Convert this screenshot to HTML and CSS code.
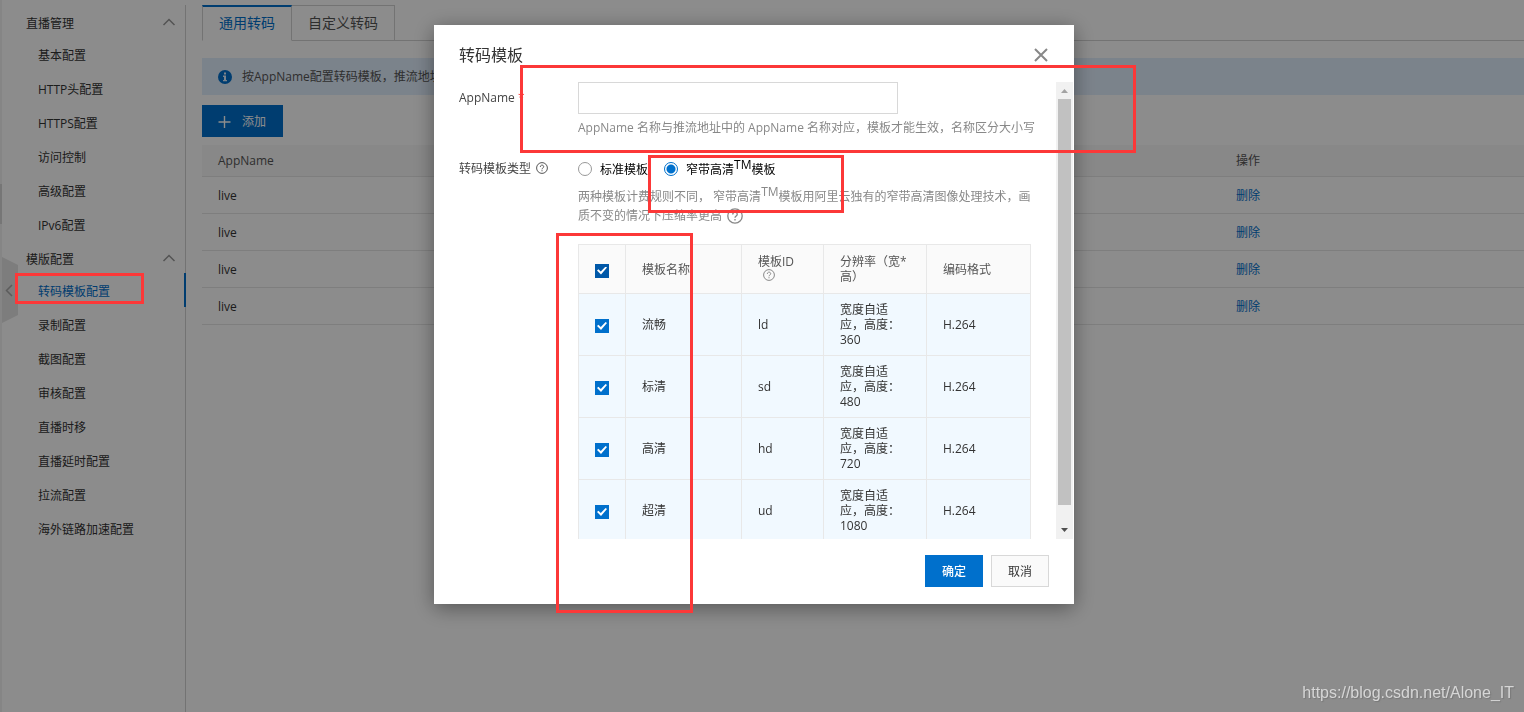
FILE: index.html
```html
<!DOCTYPE html>
<html lang="zh-CN">
<head>
<meta charset="utf-8">
<title>转码模板配置</title>
<link rel="stylesheet" href="styles.css">
</head>
<body>
<div class="page">
  <div class="edge"><span class="edge-mark"></span></div>
  <nav class="sidebar">
    <button class="collapse" type="button" aria-label="收起">
      <svg width="16" height="66" viewBox="0 0 16 66"><path d="M0 0L16 8V58L0 66Z" fill="#e3e3e3"/><path d="M10 28L4.500 33.500L10 39" fill="none" stroke="#a8a8a8" stroke-width="1.500"/></svg>
    </button>
    <button class="group" type="button">直播管理<svg width="14" height="8" viewBox="0 0 14 8"><path d="M1.500 7L7 1.500L12.500 7"/></svg></button>
    <ul class="items">
      <li><a href="#">基本配置</a></li>
      <li><a href="#">HTTP头配置</a></li>
      <li><a href="#">HTTPS配置</a></li>
      <li><a href="#">访问控制</a></li>
      <li><a href="#">高级配置</a></li>
      <li><a href="#">IPv6配置</a></li>
    </ul>
    <button class="group" type="button">模版配置<svg width="14" height="8" viewBox="0 0 14 8"><path d="M1.500 7L7 1.500L12.500 7"/></svg></button>
    <ul class="items">
      <li><a class="active" href="#">转码模板配置</a></li>
      <li><a href="#">录制配置</a></li>
      <li><a href="#">截图配置</a></li>
      <li><a href="#">审核配置</a></li>
      <li><a href="#">直播时移</a></li>
      <li><a href="#">直播延时配置</a></li>
      <li><a href="#">拉流配置</a></li>
      <li><a href="#">海外链路加速配置</a></li>
    </ul>
  </nav>
  <main class="main">
    <div class="tabs">
      <button class="tab tab-on" type="button">通用转码</button>
      <button class="tab" type="button">自定义转码</button>
    </div>
    <div class="notice">
      <svg width="14" height="14" viewBox="0 0 14 14"><circle cx="7" cy="7" r="7" fill="#0070cc"/><path d="M6 2.500h2v2H6zM5 5.600h3v4.400h1v1.300H5V10h1V6.900H5z" fill="#e1eefd"/></svg>
      <span>按AppName配置转码模板，推流地址</span>
    </div>
    <button class="add" type="button"><svg width="13" height="12" viewBox="0 0 13 12"><path d="M6.500 0V12M0.500 6H12.500" stroke="#fff" stroke-width="1.400"/></svg>添加</button>
    <table class="list">
      <thead><tr><th class="col-app">AppName</th><th>操作</th></tr></thead>
      <tbody>
        <tr><td>live</td><td><a href="#">删除</a></td></tr>
        <tr><td>live</td><td><a href="#">删除</a></td></tr>
        <tr><td>live</td><td><a href="#">删除</a></td></tr>
        <tr><td>live</td><td><a href="#">删除</a></td></tr>
      </tbody>
    </table>
  </main>
</div>

<div class="overlay">
  <section class="modal" role="dialog" aria-labelledby="modal-title">
    <header class="modal-head">
      <h2 id="modal-title">转码模板</h2>
      <button class="close" type="button" aria-label="关闭"><svg width="14" height="14" viewBox="0 0 14 14"><path d="M1 1L13 13M13 1L1 13" stroke="#888" stroke-width="2"/></svg></button>
    </header>
    <div class="modal-body">
      <div class="form">
        <label class="name" for="app">AppName <span class="star">*</span></label>
        <div class="field">
          <input class="text" id="app" type="text">
          <p class="hint one">AppName 名称与推流地址中的 AppName 名称对应，模板才能生效，名称区分大小写</p>
        </div>
        <div class="name">转码模板类型 <svg class="help type" width="12" height="12" viewBox="0 0 12 12"><circle cx="6" cy="6" r="5.400"/><path d="M4.300 4.900C4.300 2.600 7.700 2.600 7.700 4.700C7.700 6 6 5.900 6 7.300M6 8.200V9.300"/></svg></div>
        <div class="field">
          <div class="radios">
            <label class="radio"><input type="radio" name="kind"><span>标准模板</span></label>
            <label class="radio"><input type="radio" name="kind" checked><span>窄带高清<sup>TM</sup>模板</span></label>
          </div>
          <p class="hint two">两种模板计费规则不同， 窄带高清<sup>TM</sup>模板用阿里云独有的窄带高清图像处理技术，画质不变的情况下压缩率更高 <svg class="help big" width="16" height="16" viewBox="0 0 12 12"><circle cx="6" cy="6" r="5.400"/><path d="M4.300 4.900C4.300 2.600 7.700 2.600 7.700 4.700C7.700 6 6 5.900 6 7.300M6 8.200V9.300"/></svg></p>
          <table class="tpl">
            <colgroup><col class="c1"><col class="c2"><col class="c3"><col class="c4"><col class="c5"></colgroup>
            <thead><tr><th><input class="hover" type="checkbox" aria-label="全选" checked></th><th>模板名称</th><th>模板ID<br><svg class="help id" width="12" height="12" viewBox="0 0 12 12"><circle cx="6" cy="6" r="5.400"/><path d="M4.300 4.900C4.300 2.600 7.700 2.600 7.700 4.700C7.700 6 6 5.900 6 7.300M6 8.200V9.300"/></svg></th><th>分辨率（宽*高）</th><th>编码格式</th></tr></thead>
            <tbody>
              <tr><td><input type="checkbox" aria-label="流畅" checked></td><td>流畅</td><td>ld</td><td>宽度自适应，高度：360</td><td>H.264</td></tr>
              <tr><td><input type="checkbox" aria-label="标清" checked></td><td>标清</td><td>sd</td><td>宽度自适应，高度：480</td><td>H.264</td></tr>
              <tr><td><input type="checkbox" aria-label="高清" checked></td><td>高清</td><td>hd</td><td>宽度自适应，高度：720</td><td>H.264</td></tr>
              <tr><td><input type="checkbox" aria-label="超清" checked></td><td>超清</td><td>ud</td><td>宽度自适应，高度：1080</td><td>H.264</td></tr>
            </tbody>
          </table>
        </div>
      </div>
      <div class="scroll" aria-hidden="true">
        <svg width="17" height="17" viewBox="0 0 17 17"><path d="M5 11L8.500 7L12 11Z" fill="#a3a3a3"/></svg>
        <span class="thumb"></span>
        <svg width="17" height="17" viewBox="0 0 17 17"><path d="M5 6L8.500 10L12 6Z" fill="#505050"/></svg>
      </div>
    </div>
    <footer class="modal-foot">
      <button class="btn primary" type="button">确定</button>
      <button class="btn" type="button">取消</button>
    </footer>
    <span class="mark mark-name"></span>
    <span class="mark mark-kind"></span>
    <span class="mark mark-checks"></span>
  </section>
</div>
<span class="mark mark-nav"></span>
<div class="watermark">https://blog.csdn.net/Alone_IT</div>
</body>
</html>
```
FILE: styles.css
```css
* { box-sizing: border-box; }
body {
  margin: 0;
  color: #333;
  background: #fff;
  font: 12px/18px "Open Sans", "Noto Sans CJK SC", sans-serif;
  overflow: hidden;
}
button, input { font: inherit; color: inherit; }
button { padding: 0; border: 0; background: none; }
a { color: inherit; text-decoration: none; }
svg { flex: none; }
ul, p, h2 { margin: 0; padding: 0; }
ul { list-style: none; }
table { border-collapse: collapse; }
th { font-weight: 400; text-align: left; }

.page { display: flex; height: 100vh; }
.edge { width: 2px; padding-top: 184px; background: #f2f2f2; }
.edge-mark { display: block; height: 40px; background: #d8d8d8; }

.sidebar {
  position: relative;
  width: 184px;
  margin-top: 5px;
  border-right: 1px solid #d2d2d2;
}
.collapse { position: absolute; left: 0; top: 252px; height: 66px; }
.collapse svg { display: block; }
.group {
  display: flex;
  align-items: center;
  justify-content: space-between;
  width: 100%;
  height: 32px;
  padding: 6px 9px 0 24px;
}
.group svg { margin-bottom: 4px; fill: none; stroke: #999; stroke-width: 1.5; }
.items a {
  display: block;
  height: 34px;
  padding: 4px 0 0 36px;
  line-height: 30px;
  margin-right: -1px;
}
.items .active { color: #0070cc; border-right: 2px solid #0070cc; }

.main { flex: 1; min-width: 0; padding: 5px 0 0 16px; }
.tabs { display: flex; height: 36px; border-bottom: 1px solid #d2d2d2; }
.tab {
  height: 36px;
  padding: 0 16px;
  border: 1px solid #d2d2d2;
  border-left: 0;
  font-size: 14px;
  color: #555;
}
.tab-on {
  border-left: 1px solid #d2d2d2;
  border-top: 2px solid #0070cc;
  border-bottom-color: #fff;
  padding-bottom: 2px;
  color: #0070cc;
}
.notice {
  display: flex;
  align-items: center;
  gap: 10px;
  height: 37px;
  margin-top: 17px;
  padding: 0 16px;
  background: #e1eefd;
  color: #555;
  white-space: nowrap;
}
.add {
  display: flex;
  align-items: center;
  gap: 11px;
  height: 32px;
  margin: 10px 0 8px;
  padding: 2px 17px 0 16px;
  background: #0070cc;
  color: #fff;
}
.list { width: 100%; table-layout: fixed; }
.list th { height: 31px; background: #f7f7f7; color: #555; }
.list td { height: 37px; }
.list th, .list td { padding: 2px 16px 0; border-bottom: 1px solid #e6e6e6; }
.list a { color: #0070cc; }
.col-app { width: 77%; }

.overlay {
  position: fixed;
  inset: 0;
  display: flex;
  justify-content: center;
  align-items: flex-start;
  padding: 25px 16px 0 0;
  background: rgba(0, 0, 0, .45);
}
.modal {
  position: relative;
  width: 640px;
  background: #fff;
  box-shadow: 0 4px 20px rgba(0, 0, 0, .4);
}
.modal-head {
  display: flex;
  align-items: center;
  justify-content: space-between;
  height: 57px;
  padding: 2px 26px 0 25px;
}
.modal-head h2 { font-size: 16px; line-height: 24px; font-weight: 400; }
.close { width: 14px; height: 14px; }
.close svg { display: block; }
.modal-body { display: flex; height: 457px; padding-right: 1px; overflow: hidden; }
.form {
  flex: 1;
  min-width: 0;
  display: grid;
  grid-template-columns: 119px 1fr;
  align-content: start;
  padding: 0 25px;
}
.name { padding-top: 7px; white-space: nowrap; color: #444; }
.star { color: #f33; }
.text {
  display: block;
  width: 320px;
  height: 32px;
  padding: 0 8px;
  border: 1px solid #d8d8d8;
  background: #fff;
}
.hint { color: #888; }
.one { padding: 5px 0 16px; white-space: nowrap; }
.two { padding-bottom: 19px; line-height: 19px; }
.help { fill: none; stroke: #555; vertical-align: -2px; }
.type { margin-left: 2px; vertical-align: -1px; }
.big, .id { stroke: #888; }
.big { margin: -4px 0 -4px 2px; vertical-align: 0; }
.id { margin-left: 5px; vertical-align: 0; }
sup { font-size: 12px; line-height: 0; vertical-align: 5px; }
.radios { display: flex; gap: 16px; height: 34px; padding-top: 7px; color: #000; }
.radio { display: flex; gap: 8px; white-space: nowrap; height: 18px; align-items: center; }
.radio span { padding-top: 2px; }
.radio input {
  appearance: none;
  width: 14px;
  height: 14px;
  margin: 0;
  border: 1px solid #999;
  border-radius: 50%;
}
.radio input:checked {
  border-color: #0070cc;
  background: radial-gradient(circle, #0070cc 4px, #fff 5px);
}
.tpl { width: 453px; table-layout: fixed; line-height: 15px; }
.c1 { width: 47px; }
.c2 { width: 116px; }
.c3 { width: 82px; }
.c4 { width: 103px; }
.tpl th, .tpl td { border: 1px solid #e8e8e8; padding: 0 16px; }
.tpl th { height: 49px; background: #fafafa; color: #555; }
.tpl td { height: 62px; background: #f1f9ff; }
.tpl input {
  appearance: none;
  display: grid;
  place-items: center;
  width: 14px;
  height: 14px;
  margin: 3px 0 0;
  background: #0070cc;
}
.tpl .hover { background: #0058a8; }
.tpl input::before {
  content: "";
  width: 10px;
  height: 8px;
  background: #fff;
  clip-path: polygon(0 50%, 14% 35%, 38% 64%, 86% 0, 100% 14%, 40% 100%);
}
.scroll { display: flex; flex-direction: column; width: 17px; background: #f1f1f1; }
.scroll svg { display: block; }
.thumb { flex: 1; margin: 0 2px 17px; background: #c1c1c1; }
.modal-foot { display: flex; justify-content: flex-end; gap: 8px; padding: 16px 25px 17px; }
.btn { width: 58px; height: 32px; padding-top: 2px; border: 1px solid #d8d8d8; background: #fafafa; }
.primary { border-color: #0070cc; background: #0070cc; color: #fff; font-weight: 500; }

.mark { position: absolute; border: 3px solid #fc3838; pointer-events: none; }
.mark-name { left: 86px; top: 40px; width: 616px; height: 88px; }
.mark-kind { left: 214px; top: 130px; width: 196px; height: 58px; }
.mark-checks { left: 122px; top: 208px; width: 137px; height: 380px; }
.mark-nav { left: 15px; top: 273px; width: 129px; height: 31px; }
.watermark {
  position: fixed;
  right: 10px;
  bottom: 9px;
  font: 16px/20px "Liberation Sans", Arial, sans-serif;
  color: #d6d6d6;
  text-shadow: 1px 1px 1px #777;
}
```
